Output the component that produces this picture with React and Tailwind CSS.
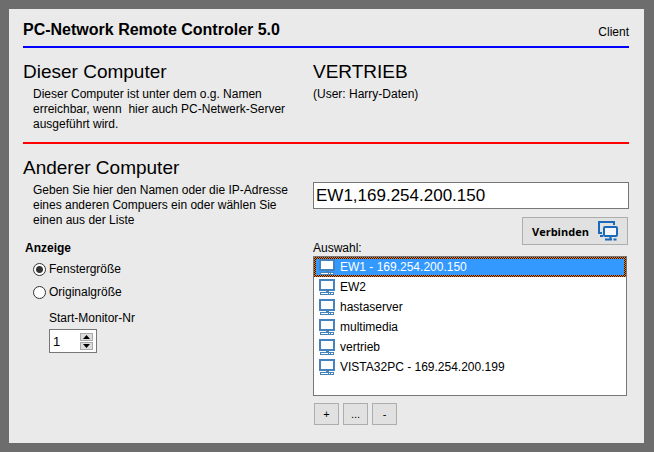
import { useState } from "react";

const computers = [
  "EW1 - 169.254.200.150",
  "EW2",
  "hastaserver",
  "multimedia",
  "vertrieb",
  "VISTA32PC - 169.254.200.199",
];

function ComputerIcon() {
  return (
    <svg className="w-4 h-4 shrink-0" viewBox="0 0 16 16" shapeRendering="crispEdges" aria-hidden="true">
      <rect x="1" y="1" width="14" height="10" fill="#fff" stroke="#4682bb" strokeWidth="2" />
      <rect x="7" y="12" width="3" height="1" fill="#4682bb" />
      <rect x="1" y="13" width="14" height="3" fill="#4682bb" />
      <path d="M2 14.5h7M10 14.5h1M12 14.5h2" stroke="#fff" />
    </svg>
  );
}

function ConnectIcon() {
  return (
    <svg className="w-5 h-5 shrink-0" viewBox="0 0 20 20" fill="none" stroke="#1a69bb" strokeWidth="2" aria-hidden="true">
      <path d="M4 12H1V1h15v3" />
      <path d="M2 15h3" />
      <rect x="6" y="6" width="13" height="9" rx="1" fill="#f4f6fa" />
      <path d="M12.5 15v3" />
      <path d="M7 18.5h7M15.5 18.5h3" />
    </svg>
  );
}

function Section({ title, indent, children }) {
  return (
    <div>
      <h2 className="text-[19px] leading-6">{title}</h2>
      <p className={indent ? "pl-[10px] pt-[3px] whitespace-pre-line" : "pt-[3px]"}>{children}</p>
    </div>
  );
}

function DisplayOptions() {
  const [mode, setMode] = useState("window");
  const [monitor, setMonitor] = useState(1);
  const radio =
    "appearance-none w-[13px] h-[13px] rounded-full border border-[#333] bg-white checked:bg-[radial-gradient(circle,#333_0_3px,#fff_4px)]";
  const row = "flex items-center gap-[3px] h-[23px]";
  const spin = "w-[13px] h-2 bg-[#ddd] border border-[#aaa] flex items-center justify-center";

  return (
    <fieldset className="pl-[2px] mt-[13px]">
      <legend className="font-bold">Anzeige</legend>
      <div className="pl-2 pt-[2px]">
        <label className={row}>
          <input type="radio" name="mode" className={radio} checked={mode === "window"} onChange={() => setMode("window")} />
          Fenstergröße
        </label>
        <label className={row}>
          <input type="radio" name="mode" className={radio} checked={mode === "original"} onChange={() => setMode("original")} />
          Originalgröße
        </label>
      </div>
      <div className="pl-6 pt-[7px]">
        <label htmlFor="monitor" className="block">Start-Monitor-Nr</label>
        <div className="mt-[3px] w-12 h-6 flex items-center border border-[#777] bg-white pr-[3px]">
          <input
            id="monitor"
            className="min-w-0 flex-1 pl-[3px] text-[13px] outline-none"
            value={monitor}
            onChange={(e) => setMonitor(e.target.value)}
          />
          <div className="flex flex-col gap-px">
            <button className={spin} aria-label="Mehr" onClick={() => setMonitor(Number(monitor) + 1)}>
              <svg className="w-[7px] h-1" viewBox="0 0 7 4"><path d="M0 4L3.5 0L7 4z" /></svg>
            </button>
            <button className={spin} aria-label="Weniger" onClick={() => setMonitor(Number(monitor) - 1)}>
              <svg className="w-[7px] h-1" viewBox="0 0 7 4"><path d="M0 0L3.5 4L7 0z" /></svg>
            </button>
          </div>
        </div>
      </div>
    </fieldset>
  );
}

function ComputerList() {
  const [selected, setSelected] = useState(0);

  return (
    <ul role="listbox" aria-labelledby="auswahl" className="mr-[2px] h-[140px] border border-[#777] bg-white">
      {computers.map((name, i) => (
        <li
          key={name}
          role="option"
          aria-selected={i === selected}
          onClick={() => setSelected(i)}
          className={
            i === selected
              ? "h-5 p-[2px] bg-[repeating-conic-gradient(#221100_0_25%,#e8801c_0_50%)] bg-size-[2px_2px] text-white"
              : "h-5 p-[2px]"
          }
        >
          <div className={i === selected ? "flex items-center gap-[5px] h-4 pl-[3px] bg-[#3399ff]" : "flex items-center gap-[5px] h-4 pl-[3px]"}>
            <ComputerIcon />
            {name}
          </div>
        </li>
      ))}
    </ul>
  );
}

function App() {
  const [address, setAddress] = useState("EW1,169.254.200.150");
  const small = "w-[25px] h-[22px] border border-[#adadad] bg-[#e1e1e1] text-[11px]";

  return (
    <div className="min-h-screen bg-[#6d6d6d] p-[9px] pr-[10px] font-['Liberation_Sans',sans-serif] text-[12px] leading-[15px] text-black">
      <main className="bg-[#eaeaea] pl-[14px] pr-[15px] pt-[11px] pb-[18px]">
        <header className="flex items-end justify-between border-b-2 border-[#0000ff] pb-[6px]">
          <h1 className="text-[16px] leading-5 font-bold">PC-Network Remote Controler 5.0</h1>
          <span>Client</span>
        </header>

        <section className="grid grid-cols-[290px_1fr] border-b-2 border-[#ff0000] pt-3 pb-[10px]">
          <Section title="Dieser Computer" indent>
            {"Dieser Computer ist unter dem o.g. Namen\nerreichbar, wenn \u00a0hier auch PC-Netwerk-Server\nausgeführt wird."}
          </Section>
          <Section title="VERTRIEB">(User: Harry-Daten)</Section>
        </section>

        <section className="grid grid-cols-[290px_1fr] pt-3">
          <div>
            <Section title="Anderer Computer" indent>
              {"Geben Sie hier den Namen oder die IP-Adresse\neines anderen Compuers ein oder wählen Sie\neinen aus der Liste"}
            </Section>
            <DisplayOptions />
          </div>
          <div className="pt-[26px]">
            <input
              aria-label="Name oder IP-Adresse"
              className="block w-full h-[27px] border border-[#777] bg-white px-[2px] text-[17px] outline-none"
              value={address}
              onChange={(e) => setAddress(e.target.value)}
            />
            <div className="flex justify-between pt-2 pr-px h-[47px]">
              <span id="auswahl" className="self-end">Auswahl:</span>
              <button className="w-[106px] h-7 flex items-center justify-between border border-[#adadad] bg-[#e1e1e1] px-[9px] font-['Open_Sans',sans-serif] text-[11px] font-bold">
                Verbinden
                <ConnectIcon />
              </button>
            </div>
            <ComputerList />
            <div className="flex gap-1 pt-[7px] pl-px">
              <button className={small}>+</button>
              <button className={small}>...</button>
              <button className={small}>-</button>
            </div>
          </div>
        </section>
      </main>
    </div>
  );
}

export default App;
